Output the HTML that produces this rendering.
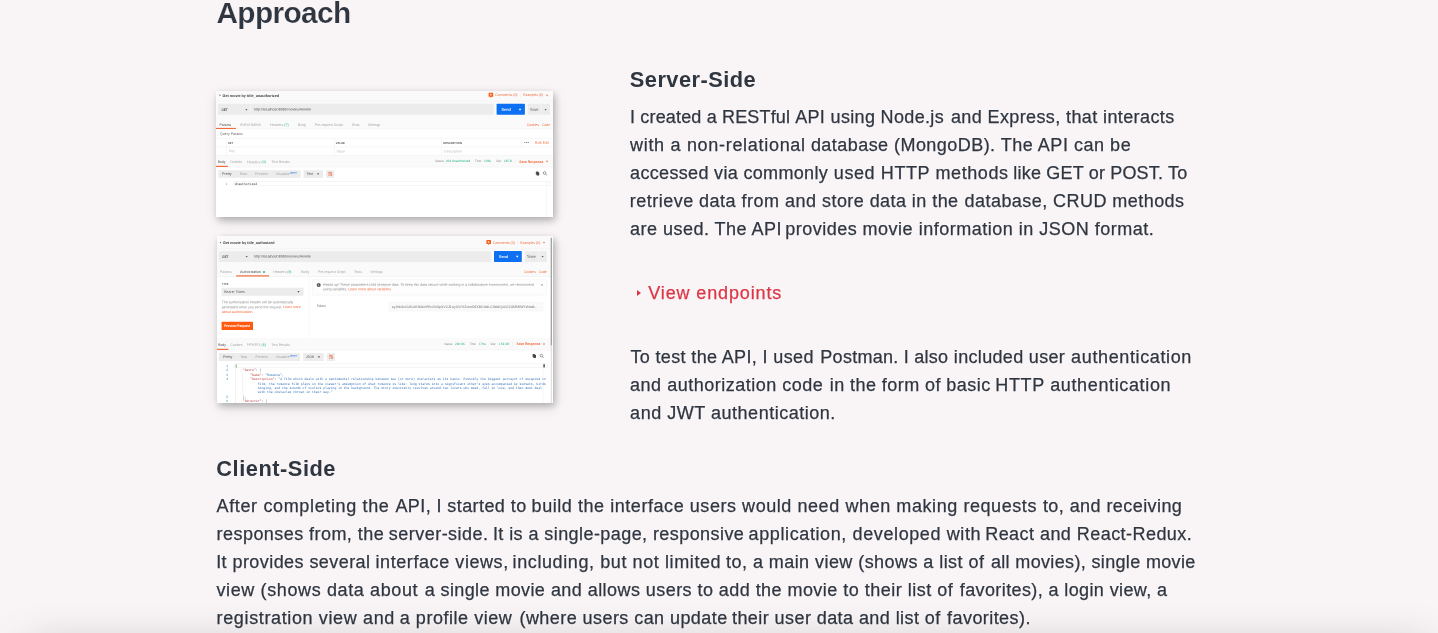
<!DOCTYPE html>
<html lang="en"><head><meta charset="utf-8"><title>Approach</title>
<style>
html,body{margin:0;padding:0}
body{width:1438px;height:633px;overflow:hidden;position:relative;background:#f9f5f7;font-family:"Liberation Sans",Arial,sans-serif;-webkit-font-smoothing:antialiased}
h2,h3,p,figure,details{margin:0;padding:0}
summary{list-style:none;display:block;cursor:pointer}summary::-webkit-details-marker{display:none}
.t{position:absolute;display:block;white-space:nowrap;line-height:28px;margin:0;-webkit-text-stroke:0.25px}
.shot{position:absolute;left:216px;width:337px;background:#fff;overflow:hidden;box-shadow:2px 3px 7px rgba(0,0,0,.26),1px 5px 14px rgba(0,0,0,.09)}
.shot svg{display:block;will-change:transform;filter:blur(0.3px)}
#s1{top:91px;height:126px}
#s2{top:236px;height:167px;left:216.7px;width:336.3px}
#s2 svg{margin-left:-0.7px}
#tri{position:absolute;left:636.8px;top:289.6px;width:0;height:0;border-left:4.6px solid #dc3545;border-top:3.2px solid transparent;border-bottom:3.2px solid transparent}
#txt{position:absolute;left:0;top:0;width:1438px;height:633px;will-change:transform}
#foot{position:absolute;left:28px;right:8px;top:645px;height:80px;box-shadow:0 0 46px rgba(0,0,0,.2)}
#h2{left:216.40px;top:-1.50px;font-size:29.8px;font-weight:700;color:#2f3640;letter-spacing:-0.6000px}
#h3a{left:629.80px;top:65.50px;font-size:21.8px;font-weight:700;color:#2f3640;letter-spacing:0.4700px}
#p1a1{left:630.05px;top:103.00px;font-size:18.0px;font-weight:400;color:#2f3640;letter-spacing:0.1611px}
#p1a2{left:795.20px;top:103.00px;font-size:18.0px;font-weight:400;color:#2f3640;letter-spacing:0.3375px}
#p1a3{left:950.90px;top:103.00px;font-size:18.0px;font-weight:400;color:#2f3640;letter-spacing:0.3923px}
#p1b1{left:630.00px;top:131.00px;font-size:18.0px;font-weight:400;color:#2f3640;letter-spacing:0.6975px}
#p1b2{left:810.90px;top:131.00px;font-size:18.0px;font-weight:400;color:#2f3640;letter-spacing:0.4500px}
#p1b3{left:1000.70px;top:131.00px;font-size:18.0px;font-weight:400;color:#2f3640;letter-spacing:0.5308px}
#p1c1{left:630.10px;top:159.00px;font-size:18.0px;font-weight:400;color:#2f3640;letter-spacing:0.3300px}
#p1c2{left:833.80px;top:159.00px;font-size:18.0px;font-weight:400;color:#2f3640;letter-spacing:0.5938px}
#p1c3{left:1013.35px;top:159.00px;font-size:18.0px;font-weight:400;color:#2f3640;letter-spacing:0.1842px}
#p1d1{left:629.80px;top:187.00px;font-size:18.0px;font-weight:400;color:#2f3640;letter-spacing:0.4762px}
#p1d2{left:822.00px;top:187.00px;font-size:18.0px;font-weight:400;color:#2f3640;letter-spacing:0.4375px}
#p1d3{left:964.60px;top:187.00px;font-size:18.0px;font-weight:400;color:#2f3640;letter-spacing:0.4452px}
#p1e1{left:630.10px;top:215.00px;font-size:18.0px;font-weight:400;color:#2f3640;letter-spacing:0.4750px}
#p1e2{left:785.35px;top:215.00px;font-size:18.0px;font-weight:400;color:#2f3640;letter-spacing:0.4692px}
#p1e3{left:918.80px;top:215.00px;font-size:18.0px;font-weight:400;color:#2f3640;letter-spacing:0.4962px}
#sum{left:648.30px;top:279.00px;font-size:18.0px;font-weight:400;color:#dc3545;letter-spacing:0.8615px}
#p2a1{left:630.40px;top:343.00px;font-size:18.0px;font-weight:400;color:#2f3640;letter-spacing:0.3591px}
#p2a2{left:820.35px;top:343.00px;font-size:18.0px;font-weight:400;color:#2f3640;letter-spacing:0.2643px}
#p2a3{left:953.80px;top:343.00px;font-size:18.0px;font-weight:400;color:#2f3640;letter-spacing:0.3333px}
#p2a4{left:1071.10px;top:343.00px;font-size:18.0px;font-weight:400;color:#2f3640;letter-spacing:0.6308px}
#p2b1{left:630.10px;top:371.00px;font-size:18.0px;font-weight:400;color:#2f3640;letter-spacing:0.5000px}
#p2b2{left:829.70px;top:371.00px;font-size:18.0px;font-weight:400;color:#2f3640;letter-spacing:0.4421px}
#p2b3{left:995.30px;top:371.00px;font-size:18.0px;font-weight:400;color:#2f3640;letter-spacing:0.6389px}
#p2c1{left:630.10px;top:399.00px;font-size:18.0px;font-weight:400;color:#2f3640;letter-spacing:0.5227px}
#h3b{left:216.35px;top:454.50px;font-size:21.8px;font-weight:700;color:#2f3640;letter-spacing:0.5250px}
#p3a1{left:216.50px;top:492.00px;font-size:18.0px;font-weight:400;color:#2f3640;letter-spacing:0.6474px}
#p3a2{left:395.40px;top:492.00px;font-size:18.0px;font-weight:400;color:#2f3640;letter-spacing:0.4188px}
#p3a3{left:531.60px;top:492.00px;font-size:18.0px;font-weight:400;color:#2f3640;letter-spacing:0.5543px}
#p3a4{left:845.50px;top:492.00px;font-size:18.0px;font-weight:400;color:#2f3640;letter-spacing:0.5684px}
#p3a5{left:1042.90px;top:492.00px;font-size:18.0px;font-weight:400;color:#2f3640;letter-spacing:0.4312px}
#p3b1{left:216.60px;top:520.00px;font-size:18.0px;font-weight:400;color:#2f3640;letter-spacing:0.4444px}
#p3b2{left:388.80px;top:520.00px;font-size:18.0px;font-weight:400;color:#2f3640;letter-spacing:0.4727px}
#p3b3{left:492.90px;top:520.00px;font-size:18.0px;font-weight:400;color:#2f3640;letter-spacing:0.4267px}
#p3b4{left:748.60px;top:520.00px;font-size:18.0px;font-weight:400;color:#2f3640;letter-spacing:0.6077px}
#p3b5{left:985.20px;top:520.00px;font-size:18.0px;font-weight:400;color:#2f3640;letter-spacing:0.4524px}
#p3c1{left:216.20px;top:548.00px;font-size:18.0px;font-weight:400;color:#2f3640;letter-spacing:0.4333px}
#p3c2{left:375.50px;top:548.00px;font-size:18.0px;font-weight:400;color:#2f3640;letter-spacing:0.5767px}
#p3c3{left:512.60px;top:548.00px;font-size:18.0px;font-weight:400;color:#2f3640;letter-spacing:0.5960px}
#p3c4{left:726.10px;top:548.00px;font-size:18.0px;font-weight:400;color:#2f3640;letter-spacing:0.4419px}
#p3c5{left:990.90px;top:548.00px;font-size:18.0px;font-weight:400;color:#2f3640;letter-spacing:0.3479px}
#p3d1{left:216.50px;top:576.00px;font-size:18.0px;font-weight:400;color:#2f3640;letter-spacing:0.6143px}
#p3d2{left:424.70px;top:576.00px;font-size:18.0px;font-weight:400;color:#2f3640;letter-spacing:0.3923px}
#p3d3{left:550.90px;top:576.00px;font-size:18.0px;font-weight:400;color:#2f3640;letter-spacing:0.4438px}
#p3d4{left:843.30px;top:576.00px;font-size:18.0px;font-weight:400;color:#2f3640;letter-spacing:0.4933px}
#p3d5{left:959.80px;top:576.00px;font-size:18.0px;font-weight:400;color:#2f3640;letter-spacing:0.3885px}
#p3e1{left:216.60px;top:604.00px;font-size:18.0px;font-weight:400;color:#2f3640;letter-spacing:0.6300px}
#p3e2{left:399.80px;top:604.00px;font-size:18.0px;font-weight:400;color:#2f3640;letter-spacing:0.5308px}
#p3e3{left:519.50px;top:604.00px;font-size:18.0px;font-weight:400;color:#2f3640;letter-spacing:0.4364px}
#p3e4{left:732.00px;top:604.00px;font-size:18.0px;font-weight:400;color:#2f3640;letter-spacing:0.4269px}
#p3e5{left:947.10px;top:604.00px;font-size:18.0px;font-weight:400;color:#2f3640;letter-spacing:0.4300px}
#h2{-webkit-text-stroke:0.18px #f9f5f7}#h3a,#h3b{-webkit-text-stroke:0}
</style></head><body>
<div id="txt">
<h2 class="t" id="h2">Approach</h2>
<section id="server">
<h3 class="t" id="h3a">Server-Side</h3>
<p><span class="t" id="p1a1">I created a RESTful</span> <span class="t" id="p1a2">API using Node.js</span> <span class="t" id="p1a3">and Express, that interacts</span> <span class="t" id="p1b1">with a non-relational</span> <span class="t" id="p1b2">database (MongoDB).</span> <span class="t" id="p1b3">The API can be</span> <span class="t" id="p1c1">accessed via commonly</span> <span class="t" id="p1c2">used HTTP methods</span> <span class="t" id="p1c3">like GET or POST. To</span> <span class="t" id="p1d1">retrieve data from and</span> <span class="t" id="p1d2">store data in the</span> <span class="t" id="p1d3">database, CRUD methods</span> <span class="t" id="p1e1">are used. The API</span> <span class="t" id="p1e2">provides movie</span> <span class="t" id="p1e3">information in JSON format.</span></p>
<details><summary class="t" id="sum">View endpoints</summary></details>
<p><span class="t" id="p2a1">To test the API, I used</span> <span class="t" id="p2a2">Postman. I also</span> <span class="t" id="p2a3">included user</span> <span class="t" id="p2a4">authentication</span> <span class="t" id="p2b1">and authorization code</span> <span class="t" id="p2b2">in the form of basic</span> <span class="t" id="p2b3">HTTP authentication</span> <span class="t" id="p2c1">and JWT authentication.</span></p>
</section>
<section id="client">
<h3 class="t" id="h3b">Client-Side</h3>
<p><span class="t" id="p3a1">After completing the</span> <span class="t" id="p3a2">API, I started to</span> <span class="t" id="p3a3">build the interface users would need</span> <span class="t" id="p3a4">when making requests</span> <span class="t" id="p3a5">to, and receiving</span> <span class="t" id="p3b1">responses from, the</span> <span class="t" id="p3b2">server-side.</span> <span class="t" id="p3b3">It is a single-page, responsive</span> <span class="t" id="p3b4">application, developed with</span> <span class="t" id="p3b5">React and React-Redux.</span> <span class="t" id="p3c1">It provides several</span> <span class="t" id="p3c2">interface views,</span> <span class="t" id="p3c3">including, but not limited</span> <span class="t" id="p3c4">to, a main view (shows a list of</span> <span class="t" id="p3c5">all movies), single movie</span> <span class="t" id="p3d1">view (shows data about</span> <span class="t" id="p3d2">a single movie</span> <span class="t" id="p3d3">and allows users to add the movie</span> <span class="t" id="p3d4">to their list of</span> <span class="t" id="p3d5">favorites), a login view, a</span> <span class="t" id="p3e1">registration view and</span> <span class="t" id="p3e2">a profile view</span> <span class="t" id="p3e3">(where users can update</span> <span class="t" id="p3e4">their user data and list of</span> <span class="t" id="p3e5">favorites).</span></p>
</section>
<div id="tri"></div>
</div>
<figure class="shot" id="s1"><svg width="337" height="126" viewBox="0 0 337 126" text-rendering="geometricPrecision"><g opacity="0.999"><rect x="0.00" y="0.00" width="337.00" height="126.00" fill="#fff" rx="0"/><rect x="0.00" y="0.00" width="337.00" height="38.00" fill="#fafafa" rx="0"/><rect x="0.00" y="64.40" width="337.00" height="11.60" fill="#fafafa" rx="0"/><path d="M3.6 3.3l1.2 0.9l-1.2 0.9z" fill="#444"/><text transform="matrix(1 0.0005 0 1 0 0)" x="6.60" y="5.64" font-family="'Liberation Sans',Arial,sans-serif" font-size="3.85" font-weight="700" fill="#3a3a3a" textLength="56.40" lengthAdjust="spacingAndGlyphs">Get movie by title_unauthorized</text><path d="M273.10 1.70h3.6a0.5 0.5 0 0 1 0.5 0.5v3a0.5 0.5 0 0 1 -0.5 0.5h-1.1l-1.2 1.2v-1.2h-1.3a0.5 0.5 0 0 1 -0.5 -0.5v-3a0.5 0.5 0 0 1 0.5 -0.5z" fill="#fa5a14"/><path d="M274.80 2.60v2.2M273.70 3.70h2.2" stroke="#fff" stroke-width="0.55" fill="none"/><text transform="matrix(1 0.0005 0 1 0 0)" x="279.30" y="5.24" font-family="'Liberation Sans',Arial,sans-serif" font-size="3.63" font-weight="400" fill="#f26b3a" textLength="22.20" lengthAdjust="spacingAndGlyphs">Comments (0)</text><line x1="304.30" y1="2.00" x2="304.30" y2="6.20" stroke="#e4e4e4" stroke-width="0.4"/><text transform="matrix(1 0.0005 0 1 0 0)" x="307.20" y="5.23" font-family="'Liberation Sans',Arial,sans-serif" font-size="3.63" font-weight="400" fill="#f26b3a" textLength="19.90" lengthAdjust="spacingAndGlyphs">Examples (0)</text><path d="M330.04 3.69h2.12l-1.06 1.70z" fill="#f26b3a"/><line x1="0.00" y1="10.00" x2="337.00" y2="10.00" stroke="#f0f0f0" stroke-width="0.5"/><rect x="2.00" y="12.70" width="275.80" height="11.10" fill="#ececec" rx="0.7"/><line x1="34.50" y1="12.70" x2="34.50" y2="23.80" stroke="#fafafa" stroke-width="0.5"/><text transform="matrix(1 0.0005 0 1 0 0)" x="5.40" y="19.58" font-family="'Liberation Sans',Arial,sans-serif" font-size="3.63" font-weight="700" fill="#505050" textLength="6.30" lengthAdjust="spacingAndGlyphs">GET</text><path d="M29.34 17.89h2.12l-1.06 1.70z" fill="#555"/><text transform="matrix(1 0.0005 0 1 0 0)" x="38.00" y="19.56" font-family="'Liberation Sans',Arial,sans-serif" font-size="3.63" font-weight="400" fill="#505050" textLength="56.90" lengthAdjust="spacingAndGlyphs">http://localhost:8080/movies/Amelie</text><rect x="280.60" y="12.70" width="28.30" height="11.10" fill="#0d6ff2" rx="0.7"/><text transform="matrix(1 0.0005 0 1 0 0)" x="285.60" y="19.60" font-family="'Liberation Sans',Arial,sans-serif" font-size="3.85" font-weight="700" fill="#fff" textLength="9.20" lengthAdjust="spacingAndGlyphs">Send</text><path d="M302.75 17.75h2.50l-1.25 2.00z" fill="#fff"/><rect x="311.70" y="12.70" width="22.30" height="11.10" fill="#ececec" rx="0.7"/><line x1="325.40" y1="12.70" x2="325.40" y2="23.80" stroke="#fafafa" stroke-width="0.5"/><text transform="matrix(1 0.0005 0 1 0 0)" x="314.00" y="19.58" font-family="'Liberation Sans',Arial,sans-serif" font-size="3.85" font-weight="400" fill="#505050" textLength="8.70" lengthAdjust="spacingAndGlyphs">Save</text><path d="M328.54 17.89h2.12l-1.06 1.70z" fill="#555"/><text transform="matrix(1 0.0005 0 1 0 0)" x="3.50" y="34.78" font-family="'Liberation Sans',Arial,sans-serif" font-size="3.63" font-weight="400" fill="#505050" textLength="11.70" lengthAdjust="spacingAndGlyphs">Params</text><text transform="matrix(1 0.0005 0 1 0 0)" x="24.00" y="34.77" font-family="'Liberation Sans',Arial,sans-serif" font-size="3.63" font-weight="400" fill="#a6a6a6" textLength="21.20" lengthAdjust="spacingAndGlyphs">Authorization</text><text transform="matrix(1 0.0005 0 1 0 0)" x="54.00" y="34.75" font-family="'Liberation Sans',Arial,sans-serif" font-size="3.63" font-weight="400" fill="#a6a6a6" textLength="13.30" lengthAdjust="spacingAndGlyphs">Headers</text><text transform="matrix(1 0.0005 0 1 0 0)" x="68.30" y="34.75" font-family="'Liberation Sans',Arial,sans-serif" font-size="3.63" font-weight="400" fill="#26b47f" textLength="4.30" lengthAdjust="spacingAndGlyphs">(7)</text><text transform="matrix(1 0.0005 0 1 0 0)" x="82.10" y="34.74" font-family="'Liberation Sans',Arial,sans-serif" font-size="3.63" font-weight="400" fill="#a6a6a6" textLength="8.00" lengthAdjust="spacingAndGlyphs">Body</text><text transform="matrix(1 0.0005 0 1 0 0)" x="98.70" y="34.73" font-family="'Liberation Sans',Arial,sans-serif" font-size="3.63" font-weight="400" fill="#a6a6a6" textLength="28.00" lengthAdjust="spacingAndGlyphs">Pre-request Script</text><text transform="matrix(1 0.0005 0 1 0 0)" x="135.60" y="34.71" font-family="'Liberation Sans',Arial,sans-serif" font-size="3.63" font-weight="400" fill="#a6a6a6" textLength="8.00" lengthAdjust="spacingAndGlyphs">Tests</text><text transform="matrix(1 0.0005 0 1 0 0)" x="152.00" y="34.70" font-family="'Liberation Sans',Arial,sans-serif" font-size="3.63" font-weight="400" fill="#a6a6a6" textLength="12.30" lengthAdjust="spacingAndGlyphs">Settings</text><text transform="matrix(1 0.0005 0 1 0 0)" x="310.90" y="34.62" font-family="'Liberation Sans',Arial,sans-serif" font-size="3.63" font-weight="400" fill="#f26b3a" textLength="12.10" lengthAdjust="spacingAndGlyphs">Cookies</text><text transform="matrix(1 0.0005 0 1 0 0)" x="326.20" y="34.62" font-family="'Liberation Sans',Arial,sans-serif" font-size="3.63" font-weight="400" fill="#f26b3a" textLength="7.80" lengthAdjust="spacingAndGlyphs">Code</text><line x1="0.00" y1="38.00" x2="337.00" y2="38.00" stroke="#ececec" stroke-width="0.5"/><rect x="0.00" y="36.90" width="19.90" height="1.10" fill="#f26b3a" rx="0"/><text transform="matrix(1 0.0005 0 1 0 0)" x="4.10" y="43.68" font-family="'Liberation Sans',Arial,sans-serif" font-size="3.63" font-weight="400" fill="#666" textLength="22.80" lengthAdjust="spacingAndGlyphs">Query Params</text><line x1="0.00" y1="47.30" x2="337.00" y2="47.30" stroke="#ececec" stroke-width="0.45"/><line x1="0.00" y1="55.90" x2="337.00" y2="55.90" stroke="#ececec" stroke-width="0.45"/><line x1="0.00" y1="64.40" x2="337.00" y2="64.40" stroke="#ececec" stroke-width="0.45"/><line x1="10.40" y1="47.30" x2="10.40" y2="64.40" stroke="#ececec" stroke-width="0.45"/><line x1="118.50" y1="47.30" x2="118.50" y2="64.40" stroke="#ececec" stroke-width="0.45"/><line x1="225.60" y1="47.30" x2="225.60" y2="64.40" stroke="#ececec" stroke-width="0.45"/><line x1="305.60" y1="47.30" x2="305.60" y2="55.90" stroke="#ececec" stroke-width="0.45"/><text transform="matrix(1 0.0005 0 1 0 0)" x="12.00" y="52.70" font-family="'Liberation Sans',Arial,sans-serif" font-size="2.97" font-weight="700" fill="#555" textLength="5.10" lengthAdjust="spacingAndGlyphs">KEY</text><text transform="matrix(1 0.0005 0 1 0 0)" x="119.80" y="52.64" font-family="'Liberation Sans',Arial,sans-serif" font-size="2.97" font-weight="700" fill="#555" textLength="9.10" lengthAdjust="spacingAndGlyphs">VALUE</text><text transform="matrix(1 0.0005 0 1 0 0)" x="227.20" y="52.59" font-family="'Liberation Sans',Arial,sans-serif" font-size="2.97" font-weight="700" fill="#555" textLength="18.70" lengthAdjust="spacingAndGlyphs">DESCRIPTION</text><text transform="matrix(1 0.0005 0 1 0 0)" x="308.10" y="52.32" font-family="'Liberation Sans',Arial,sans-serif" font-size="2.86" font-weight="700" fill="#555" textLength="5.10" lengthAdjust="spacingAndGlyphs">•••</text><text transform="matrix(1 0.0005 0 1 0 0)" x="319.10" y="52.69" font-family="'Liberation Sans',Arial,sans-serif" font-size="3.52" font-weight="400" fill="#f26b3a" textLength="13.70" lengthAdjust="spacingAndGlyphs">Bulk Edit</text><text transform="matrix(1 0.0005 0 1 0 0)" x="13.00" y="61.44" font-family="'Liberation Sans',Arial,sans-serif" font-size="3.52" font-weight="400" fill="#bdbdbd" textLength="5.70" lengthAdjust="spacingAndGlyphs">Key</text><text transform="matrix(1 0.0005 0 1 0 0)" x="120.40" y="61.39" font-family="'Liberation Sans',Arial,sans-serif" font-size="3.52" font-weight="400" fill="#bdbdbd" textLength="8.60" lengthAdjust="spacingAndGlyphs">Value</text><text transform="matrix(1 0.0005 0 1 0 0)" x="228.10" y="61.34" font-family="'Liberation Sans',Arial,sans-serif" font-size="3.52" font-weight="400" fill="#bdbdbd" textLength="17.80" lengthAdjust="spacingAndGlyphs">Description</text><text transform="matrix(1 0.0005 0 1 0 0)" x="1.80" y="72.28" font-family="'Liberation Sans',Arial,sans-serif" font-size="3.63" font-weight="400" fill="#505050" textLength="7.70" lengthAdjust="spacingAndGlyphs">Body</text><text transform="matrix(1 0.0005 0 1 0 0)" x="14.20" y="72.27" font-family="'Liberation Sans',Arial,sans-serif" font-size="3.63" font-weight="400" fill="#a6a6a6" textLength="12.00" lengthAdjust="spacingAndGlyphs">Cookies</text><text transform="matrix(1 0.0005 0 1 0 0)" x="31.00" y="72.26" font-family="'Liberation Sans',Arial,sans-serif" font-size="3.63" font-weight="400" fill="#a6a6a6" textLength="13.60" lengthAdjust="spacingAndGlyphs">Headers</text><text transform="matrix(1 0.0005 0 1 0 0)" x="45.60" y="72.26" font-family="'Liberation Sans',Arial,sans-serif" font-size="3.63" font-weight="400" fill="#26b47f" textLength="4.30" lengthAdjust="spacingAndGlyphs">(4)</text><text transform="matrix(1 0.0005 0 1 0 0)" x="55.60" y="72.25" font-family="'Liberation Sans',Arial,sans-serif" font-size="3.63" font-weight="400" fill="#a6a6a6" textLength="18.40" lengthAdjust="spacingAndGlyphs">Test Results</text><text transform="matrix(1 0.0005 0 1 0 0)" x="219.00" y="71.25" font-family="'Liberation Sans',Arial,sans-serif" font-size="3.19" font-weight="400" fill="#8a8a8a" textLength="9.20" lengthAdjust="spacingAndGlyphs">Status:</text><text transform="matrix(1 0.0005 0 1 0 0)" x="230.00" y="71.25" font-family="'Liberation Sans',Arial,sans-serif" font-size="3.19" font-weight="400" fill="#26b47f" textLength="24.10" lengthAdjust="spacingAndGlyphs">401 Unauthorized</text><text transform="matrix(1 0.0005 0 1 0 0)" x="259.10" y="71.23" font-family="'Liberation Sans',Arial,sans-serif" font-size="3.19" font-weight="400" fill="#8a8a8a" textLength="6.70" lengthAdjust="spacingAndGlyphs">Time:</text><text transform="matrix(1 0.0005 0 1 0 0)" x="267.70" y="71.23" font-family="'Liberation Sans',Arial,sans-serif" font-size="3.19" font-weight="400" fill="#26b47f" textLength="7.30" lengthAdjust="spacingAndGlyphs">3.08s</text><text transform="matrix(1 0.0005 0 1 0 0)" x="279.90" y="71.22" font-family="'Liberation Sans',Arial,sans-serif" font-size="3.19" font-weight="400" fill="#8a8a8a" textLength="5.80" lengthAdjust="spacingAndGlyphs">Size:</text><text transform="matrix(1 0.0005 0 1 0 0)" x="287.90" y="71.22" font-family="'Liberation Sans',Arial,sans-serif" font-size="3.19" font-weight="400" fill="#26b47f" textLength="8.00" lengthAdjust="spacingAndGlyphs">145 B</text><line x1="299.60" y1="68.00" x2="299.60" y2="72.60" stroke="#e8e8e8" stroke-width="0.4"/><text transform="matrix(1 0.0005 0 1 0 0)" x="303.30" y="71.43" font-family="'Liberation Sans',Arial,sans-serif" font-size="3.63" font-weight="700" fill="#f26b3a" textLength="24.00" lengthAdjust="spacingAndGlyphs">Save Response</text><path d="M330.04 69.79h2.12l-1.06 1.70z" fill="#f26b3a"/><line x1="0.00" y1="76.00" x2="337.00" y2="76.00" stroke="#ececec" stroke-width="0.5"/><rect x="0.00" y="74.80" width="11.80" height="1.20" fill="#f26b3a" rx="0"/><rect x="2.30" y="79.20" width="82.40" height="7.60" fill="#ececec" rx="0.6"/><text transform="matrix(1 0.0005 0 1 0 0)" x="6.00" y="83.98" font-family="'Liberation Sans',Arial,sans-serif" font-size="3.63" font-weight="400" fill="#505050" textLength="9.70" lengthAdjust="spacingAndGlyphs">Pretty</text><text transform="matrix(1 0.0005 0 1 0 0)" x="24.10" y="83.97" font-family="'Liberation Sans',Arial,sans-serif" font-size="3.63" font-weight="400" fill="#a6a6a6" textLength="6.80" lengthAdjust="spacingAndGlyphs">Raw</text><text transform="matrix(1 0.0005 0 1 0 0)" x="39.10" y="83.96" font-family="'Liberation Sans',Arial,sans-serif" font-size="3.63" font-weight="400" fill="#a6a6a6" textLength="12.70" lengthAdjust="spacingAndGlyphs">Preview</text><text transform="matrix(1 0.0005 0 1 0 0)" x="60.00" y="83.95" font-family="'Liberation Sans',Arial,sans-serif" font-size="3.63" font-weight="400" fill="#a6a6a6" textLength="13.90" lengthAdjust="spacingAndGlyphs">Visualize</text><text transform="matrix(1 0.0005 0 1 0 0)" x="74.50" y="82.46" font-family="'Liberation Sans',Arial,sans-serif" font-size="2.2" font-weight="700" fill="#2a83f2" textLength="6.70" lengthAdjust="spacingAndGlyphs">BETA</text><rect x="87.60" y="79.20" width="19.40" height="7.60" fill="#ececec" rx="0.6"/><text transform="matrix(1 0.0005 0 1 0 0)" x="90.70" y="83.93" font-family="'Liberation Sans',Arial,sans-serif" font-size="3.63" font-weight="400" fill="#505050" textLength="6.30" lengthAdjust="spacingAndGlyphs">Text</text><path d="M101.04 82.29h2.12l-1.06 1.70z" fill="#555"/><rect x="110.00" y="79.20" width="8.20" height="7.60" fill="#ececec" rx="0.6"/><path d="M112.40 81.40h3.4M112.40 82.80h3.4v1.5h-1.6M112.40 84.30h1.2" fill="none" stroke="#f26b3a" stroke-width="0.75"/><rect x="319.80" y="80.50" width="2.6" height="3.1" rx="0.4" fill="#555"/><rect x="320.60" y="81.30" width="2.6" height="3.1" rx="0.4" fill="#444"/><circle cx="328.60" cy="82.00" r="1.35" fill="none" stroke="#555" stroke-width="0.55"/><line x1="329.60" y1="83.00" x2="330.80" y2="84.20" stroke="#555" stroke-width="0.6"/><rect x="18.20" y="90.60" width="315.80" height="3.90" fill="none" rx="0" stroke="#e9e9e9" stroke-width="0.45"/><line x1="330.60" y1="90.60" x2="330.60" y2="126.00" stroke="#ececec" stroke-width="0.45"/><text transform="matrix(1 0.0005 0 1 0 0)" x="9.80" y="93.52" font-family="'Liberation Mono','DejaVu Sans Mono',monospace" font-size="3.41" font-weight="400" fill="#2b88a8" textLength="1.50" lengthAdjust="spacingAndGlyphs">1</text><text transform="matrix(1 0.0005 0 1 0 0)" x="18.70" y="93.51" font-family="'Liberation Mono','DejaVu Sans Mono',monospace" font-size="3.41" font-weight="400" fill="#333" textLength="22.30" lengthAdjust="spacingAndGlyphs">Unauthorized</text></g></svg></figure>
<figure class="shot" id="s2"><svg width="337" height="167" viewBox="0 0 337 167" text-rendering="geometricPrecision"><g opacity="0.999"><rect x="0.00" y="0.00" width="337.00" height="167.00" fill="#fff" rx="0"/><rect x="0.00" y="0.00" width="337.00" height="40.50" fill="#fafafa" rx="0"/><rect x="0.00" y="102.00" width="337.00" height="12.00" fill="#fafafa" rx="0"/><path d="M4.1 5.7l1.3 0.9l-1.3 0.9z" fill="#444"/><text transform="matrix(1 0.0005 0 1 0 0)" x="7.10" y="7.64" font-family="'Liberation Sans',Arial,sans-serif" font-size="3.85" font-weight="700" fill="#3a3a3a" textLength="51.40" lengthAdjust="spacingAndGlyphs">Get movie by title_authorized</text><path d="M270.90 4.10h3.6a0.5 0.5 0 0 1 0.5 0.5v3a0.5 0.5 0 0 1 -0.5 0.5h-1.1l-1.2 1.2v-1.2h-1.3a0.5 0.5 0 0 1 -0.5 -0.5v-3a0.5 0.5 0 0 1 0.5 -0.5z" fill="#fa5a14"/><path d="M272.60 5.00v2.2M271.50 6.10h2.2" stroke="#fff" stroke-width="0.55" fill="none"/><text transform="matrix(1 0.0005 0 1 0 0)" x="276.90" y="7.44" font-family="'Liberation Sans',Arial,sans-serif" font-size="3.63" font-weight="400" fill="#f26b3a" textLength="21.90" lengthAdjust="spacingAndGlyphs">Comments (0)</text><line x1="301.60" y1="4.40" x2="301.60" y2="8.80" stroke="#e4e4e4" stroke-width="0.4"/><text transform="matrix(1 0.0005 0 1 0 0)" x="304.30" y="7.43" font-family="'Liberation Sans',Arial,sans-serif" font-size="3.63" font-weight="400" fill="#f26b3a" textLength="19.70" lengthAdjust="spacingAndGlyphs">Examples (0)</text><path d="M326.94 5.89h2.12l-1.06 1.70z" fill="#f26b3a"/><line x1="0.00" y1="12.70" x2="337.00" y2="12.70" stroke="#f0f0f0" stroke-width="0.5"/><rect x="2.60" y="15.20" width="272.70" height="10.80" fill="#ececec" rx="0.7"/><line x1="35.00" y1="15.20" x2="35.00" y2="26.00" stroke="#fafafa" stroke-width="0.5"/><text transform="matrix(1 0.0005 0 1 0 0)" x="6.00" y="21.58" font-family="'Liberation Sans',Arial,sans-serif" font-size="3.63" font-weight="700" fill="#505050" textLength="6.30" lengthAdjust="spacingAndGlyphs">GET</text><path d="M29.64 19.89h2.12l-1.06 1.70z" fill="#555"/><text transform="matrix(1 0.0005 0 1 0 0)" x="38.00" y="21.56" font-family="'Liberation Sans',Arial,sans-serif" font-size="3.63" font-weight="400" fill="#505050" textLength="56.80" lengthAdjust="spacingAndGlyphs">http://localhost:8080/movies/Amelie</text><rect x="278.00" y="15.10" width="27.80" height="10.90" fill="#0d6ff2" rx="0.7"/><text transform="matrix(1 0.0005 0 1 0 0)" x="283.10" y="21.50" font-family="'Liberation Sans',Arial,sans-serif" font-size="3.85" font-weight="700" fill="#fff" textLength="9.00" lengthAdjust="spacingAndGlyphs">Send</text><path d="M299.95 19.75h2.50l-1.25 2.00z" fill="#fff"/><rect x="308.80" y="15.20" width="22.10" height="10.80" fill="#ececec" rx="0.7"/><line x1="322.70" y1="15.20" x2="322.70" y2="26.00" stroke="#fafafa" stroke-width="0.5"/><text transform="matrix(1 0.0005 0 1 0 0)" x="311.00" y="21.48" font-family="'Liberation Sans',Arial,sans-serif" font-size="3.85" font-weight="400" fill="#505050" textLength="8.80" lengthAdjust="spacingAndGlyphs">Save</text><path d="M325.54 19.89h2.12l-1.06 1.70z" fill="#555"/><text transform="matrix(1 0.0005 0 1 0 0)" x="4.10" y="37.08" font-family="'Liberation Sans',Arial,sans-serif" font-size="3.63" font-weight="400" fill="#a6a6a6" textLength="11.60" lengthAdjust="spacingAndGlyphs">Params</text><text transform="matrix(1 0.0005 0 1 0 0)" x="24.00" y="37.07" font-family="'Liberation Sans',Arial,sans-serif" font-size="3.63" font-weight="400" fill="#505050" textLength="21.20" lengthAdjust="spacingAndGlyphs">Authorization</text><circle cx="48" cy="36.1" r="1" fill="#26b47f"/><text transform="matrix(1 0.0005 0 1 0 0)" x="57.20" y="37.05" font-family="'Liberation Sans',Arial,sans-serif" font-size="3.63" font-weight="400" fill="#a6a6a6" textLength="13.10" lengthAdjust="spacingAndGlyphs">Headers</text><text transform="matrix(1 0.0005 0 1 0 0)" x="71.30" y="37.04" font-family="'Liberation Sans',Arial,sans-serif" font-size="3.63" font-weight="400" fill="#26b47f" textLength="4.20" lengthAdjust="spacingAndGlyphs">(8)</text><text transform="matrix(1 0.0005 0 1 0 0)" x="85.30" y="37.04" font-family="'Liberation Sans',Arial,sans-serif" font-size="3.63" font-weight="400" fill="#a6a6a6" textLength="7.90" lengthAdjust="spacingAndGlyphs">Body</text><text transform="matrix(1 0.0005 0 1 0 0)" x="101.70" y="37.03" font-family="'Liberation Sans',Arial,sans-serif" font-size="3.63" font-weight="400" fill="#a6a6a6" textLength="27.80" lengthAdjust="spacingAndGlyphs">Pre-request Script</text><text transform="matrix(1 0.0005 0 1 0 0)" x="138.00" y="37.01" font-family="'Liberation Sans',Arial,sans-serif" font-size="3.63" font-weight="400" fill="#a6a6a6" textLength="8.00" lengthAdjust="spacingAndGlyphs">Tests</text><text transform="matrix(1 0.0005 0 1 0 0)" x="154.30" y="37.00" font-family="'Liberation Sans',Arial,sans-serif" font-size="3.63" font-weight="400" fill="#a6a6a6" textLength="12.40" lengthAdjust="spacingAndGlyphs">Settings</text><text transform="matrix(1 0.0005 0 1 0 0)" x="307.90" y="36.93" font-family="'Liberation Sans',Arial,sans-serif" font-size="3.63" font-weight="400" fill="#f26b3a" textLength="11.90" lengthAdjust="spacingAndGlyphs">Cookies</text><text transform="matrix(1 0.0005 0 1 0 0)" x="323.00" y="36.92" font-family="'Liberation Sans',Arial,sans-serif" font-size="3.63" font-weight="400" fill="#f26b3a" textLength="7.90" lengthAdjust="spacingAndGlyphs">Code</text><line x1="0.00" y1="40.50" x2="337.00" y2="40.50" stroke="#ececec" stroke-width="0.5"/><rect x="20.20" y="39.30" width="32.80" height="1.20" fill="#f26b3a" rx="0"/><text transform="matrix(1 0.0005 0 1 0 0)" x="5.80" y="48.80" font-family="'Liberation Sans',Arial,sans-serif" font-size="2.97" font-weight="700" fill="#666" textLength="6.80" lengthAdjust="spacingAndGlyphs">TYPE</text><rect x="5.60" y="51.80" width="82.00" height="7.90" fill="#ececec" rx="0.6"/><text transform="matrix(1 0.0005 0 1 0 0)" x="8.20" y="56.68" font-family="'Liberation Sans',Arial,sans-serif" font-size="3.63" font-weight="400" fill="#606060" textLength="20.90" lengthAdjust="spacingAndGlyphs">Bearer Token</text><path d="M81.44 54.99h2.12l-1.06 1.70z" fill="#555"/><text transform="matrix(1 0.0005 0 1 0 0)" x="5.80" y="67.25" font-family="'Liberation Sans',Arial,sans-serif" font-size="3.52" font-weight="400" fill="#8a8a8a" textLength="71.60" lengthAdjust="spacingAndGlyphs">The authorization header will be automatically</text><text transform="matrix(1 0.0005 0 1 0 0)" x="5.80" y="72.15" font-family="'Liberation Sans',Arial,sans-serif" font-size="3.52" font-weight="400" fill="#8a8a8a" textLength="60.40" lengthAdjust="spacingAndGlyphs">generated when you send the request.</text><text transform="matrix(1 0.0005 0 1 0 0)" x="67.20" y="72.12" font-family="'Liberation Sans',Arial,sans-serif" font-size="3.52" font-weight="400" fill="#f26b3a" textLength="17.40" lengthAdjust="spacingAndGlyphs">Learn more</text><text transform="matrix(1 0.0005 0 1 0 0)" x="5.80" y="77.05" font-family="'Liberation Sans',Arial,sans-serif" font-size="3.52" font-weight="400" fill="#f26b3a" textLength="30.80" lengthAdjust="spacingAndGlyphs">about authorization</text><rect x="5.60" y="85.70" width="31.40" height="8.30" fill="#ff5a0f" rx="0.6"/><text transform="matrix(1 0.0005 0 1 0 0)" x="8.20" y="90.88" font-family="'Liberation Sans',Arial,sans-serif" font-size="3.63" font-weight="700" fill="#fff" textLength="26.00" lengthAdjust="spacingAndGlyphs">Preview Request</text><line x1="93.20" y1="40.50" x2="93.20" y2="102.00" stroke="#efefef" stroke-width="0.45"/><rect x="96.40" y="43.70" width="234.20" height="15.40" fill="#fdfdfd" rx="0.6" stroke="#ececec" stroke-width="0.45"/><circle cx="102.7" cy="49" r="2" fill="#555"/><text transform="matrix(1 0.0005 0 1 0 0)" x="102.25" y="49.72" font-family="'Liberation Sans',Arial,sans-serif" font-size="2.86" font-weight="700" fill="#fff" textLength="0.90" lengthAdjust="spacingAndGlyphs">i</text><text transform="matrix(1 0.0005 0 1 0 0)" x="107.10" y="49.60" font-family="'Liberation Sans',Arial,sans-serif" font-size="3.52" font-weight="400" fill="#8a8a8a" textLength="210.90" lengthAdjust="spacingAndGlyphs">Heads up! These parameters hold sensitive data. To keep this data secure while working in a collaborative environment, we recommend</text><text transform="matrix(1 0.0005 0 1 0 0)" x="107.10" y="54.30" font-family="'Liberation Sans',Arial,sans-serif" font-size="3.52" font-weight="400" fill="#8a8a8a" textLength="24.10" lengthAdjust="spacingAndGlyphs">using variables.</text><text transform="matrix(1 0.0005 0 1 0 0)" x="132.20" y="54.28" font-family="'Liberation Sans',Arial,sans-serif" font-size="3.52" font-weight="400" fill="#f26b3a" textLength="42.80" lengthAdjust="spacingAndGlyphs">Learn more about variables</text><text transform="matrix(1 0.0005 0 1 0 0)" x="325.20" y="49.79" font-family="'Liberation Sans',Arial,sans-serif" font-size="3.52" font-weight="700" fill="#555" textLength="1.70" lengthAdjust="spacingAndGlyphs">×</text><text transform="matrix(1 0.0005 0 1 0 0)" x="100.80" y="71.20" font-family="'Liberation Sans',Arial,sans-serif" font-size="3.52" font-weight="400" fill="#707070" textLength="8.90" lengthAdjust="spacingAndGlyphs">Token</text><rect x="173.10" y="66.30" width="153.70" height="8.70" fill="#fafafa" rx="0.6" stroke="#efefef" stroke-width="0.4"/><text transform="matrix(1 0.0005 0 1 0 0)" x="176.00" y="71.46" font-family="'Liberation Sans',Arial,sans-serif" font-size="3.52" font-weight="400" fill="#707070" textLength="145.40" lengthAdjust="spacingAndGlyphs">eyJhbGciOiJIUzI1NiIsInR5cCI6IkpXVCJ9.eyJGYXZvcml0ZXMiOltdLCJfaWQiOiI1ZGM5MWYxNzdk...</text><text transform="matrix(1 0.0005 0 1 0 0)" x="2.20" y="109.58" font-family="'Liberation Sans',Arial,sans-serif" font-size="3.63" font-weight="400" fill="#505050" textLength="7.80" lengthAdjust="spacingAndGlyphs">Body</text><text transform="matrix(1 0.0005 0 1 0 0)" x="14.60" y="109.57" font-family="'Liberation Sans',Arial,sans-serif" font-size="3.63" font-weight="400" fill="#a6a6a6" textLength="12.00" lengthAdjust="spacingAndGlyphs">Cookies</text><text transform="matrix(1 0.0005 0 1 0 0)" x="31.00" y="109.56" font-family="'Liberation Sans',Arial,sans-serif" font-size="3.63" font-weight="400" fill="#a6a6a6" textLength="13.60" lengthAdjust="spacingAndGlyphs">Headers</text><text transform="matrix(1 0.0005 0 1 0 0)" x="45.60" y="109.56" font-family="'Liberation Sans',Arial,sans-serif" font-size="3.63" font-weight="400" fill="#26b47f" textLength="4.30" lengthAdjust="spacingAndGlyphs">(6)</text><text transform="matrix(1 0.0005 0 1 0 0)" x="55.60" y="109.55" font-family="'Liberation Sans',Arial,sans-serif" font-size="3.63" font-weight="400" fill="#a6a6a6" textLength="18.40" lengthAdjust="spacingAndGlyphs">Test Results</text><text transform="matrix(1 0.0005 0 1 0 0)" x="228.20" y="108.75" font-family="'Liberation Sans',Arial,sans-serif" font-size="3.19" font-weight="400" fill="#8a8a8a" textLength="8.70" lengthAdjust="spacingAndGlyphs">Status:</text><text transform="matrix(1 0.0005 0 1 0 0)" x="239.10" y="108.74" font-family="'Liberation Sans',Arial,sans-serif" font-size="3.19" font-weight="400" fill="#26b47f" textLength="9.90" lengthAdjust="spacingAndGlyphs">200 OK</text><text transform="matrix(1 0.0005 0 1 0 0)" x="254.00" y="108.73" font-family="'Liberation Sans',Arial,sans-serif" font-size="3.19" font-weight="400" fill="#8a8a8a" textLength="6.30" lengthAdjust="spacingAndGlyphs">Time:</text><text transform="matrix(1 0.0005 0 1 0 0)" x="262.90" y="108.73" font-family="'Liberation Sans',Arial,sans-serif" font-size="3.19" font-weight="400" fill="#26b47f" textLength="7.10" lengthAdjust="spacingAndGlyphs">17ms</text><text transform="matrix(1 0.0005 0 1 0 0)" x="274.20" y="108.72" font-family="'Liberation Sans',Arial,sans-serif" font-size="3.19" font-weight="400" fill="#8a8a8a" textLength="5.80" lengthAdjust="spacingAndGlyphs">Size:</text><text transform="matrix(1 0.0005 0 1 0 0)" x="282.60" y="108.72" font-family="'Liberation Sans',Arial,sans-serif" font-size="3.19" font-weight="400" fill="#26b47f" textLength="10.60" lengthAdjust="spacingAndGlyphs">1.54 KB</text><line x1="296.80" y1="105.80" x2="296.80" y2="110.40" stroke="#e8e8e8" stroke-width="0.4"/><text transform="matrix(1 0.0005 0 1 0 0)" x="300.50" y="108.93" font-family="'Liberation Sans',Arial,sans-serif" font-size="3.63" font-weight="700" fill="#f26b3a" textLength="23.80" lengthAdjust="spacingAndGlyphs">Save Response</text><path d="M326.94 107.59h2.12l-1.06 1.70z" fill="#f26b3a"/><line x1="0.00" y1="114.00" x2="337.00" y2="114.00" stroke="#ececec" stroke-width="0.5"/><rect x="0.00" y="112.80" width="12.30" height="1.20" fill="#f26b3a" rx="0"/><rect x="2.80" y="117.10" width="81.30" height="7.80" fill="#ececec" rx="0.6"/><text transform="matrix(1 0.0005 0 1 0 0)" x="7.00" y="121.98" font-family="'Liberation Sans',Arial,sans-serif" font-size="3.63" font-weight="400" fill="#505050" textLength="9.40" lengthAdjust="spacingAndGlyphs">Pretty</text><text transform="matrix(1 0.0005 0 1 0 0)" x="24.70" y="121.97" font-family="'Liberation Sans',Arial,sans-serif" font-size="3.63" font-weight="400" fill="#a6a6a6" textLength="6.30" lengthAdjust="spacingAndGlyphs">Raw</text><text transform="matrix(1 0.0005 0 1 0 0)" x="39.50" y="121.96" font-family="'Liberation Sans',Arial,sans-serif" font-size="3.63" font-weight="400" fill="#a6a6a6" textLength="12.30" lengthAdjust="spacingAndGlyphs">Preview</text><text transform="matrix(1 0.0005 0 1 0 0)" x="60.00" y="121.95" font-family="'Liberation Sans',Arial,sans-serif" font-size="3.63" font-weight="400" fill="#a6a6a6" textLength="13.60" lengthAdjust="spacingAndGlyphs">Visualize</text><text transform="matrix(1 0.0005 0 1 0 0)" x="74.30" y="120.36" font-family="'Liberation Sans',Arial,sans-serif" font-size="2.2" font-weight="700" fill="#2a83f2" textLength="6.90" lengthAdjust="spacingAndGlyphs">BETA</text><rect x="87.20" y="117.10" width="20.60" height="7.80" fill="#ececec" rx="0.6"/><text transform="matrix(1 0.0005 0 1 0 0)" x="90.10" y="121.94" font-family="'Liberation Sans',Arial,sans-serif" font-size="3.63" font-weight="400" fill="#505050" textLength="7.80" lengthAdjust="spacingAndGlyphs">JSON</text><path d="M101.94 120.29h2.12l-1.06 1.70z" fill="#555"/><rect x="110.90" y="117.10" width="8.00" height="7.80" fill="#ececec" rx="0.6"/><path d="M113.20 119.40h3.4M113.20 120.80h3.4v1.5h-1.6M113.20 122.30h1.2" fill="none" stroke="#f26b3a" stroke-width="0.75"/><rect x="316.60" y="118.10" width="2.6" height="3.1" rx="0.4" fill="#555"/><rect x="317.40" y="118.90" width="2.6" height="3.1" rx="0.4" fill="#444"/><circle cx="325.40" cy="119.60" r="1.35" fill="none" stroke="#555" stroke-width="0.55"/><line x1="326.40" y1="120.60" x2="327.60" y2="121.80" stroke="#555" stroke-width="0.6"/><rect x="18.60" y="127.90" width="312.90" height="3.80" fill="none" rx="0" stroke="#e9e9e9" stroke-width="0.45"/><line x1="327.00" y1="127.90" x2="327.00" y2="167.00" stroke="#ececec" stroke-width="0.45"/><rect x="327.40" y="128.20" width="1.40" height="3.20" fill="#444" rx="0"/><line x1="19.50" y1="131.70" x2="19.50" y2="167.00" stroke="#dedede" stroke-width="0.4"/><line x1="26.80" y1="136.50" x2="26.80" y2="158.80" stroke="#dedede" stroke-width="0.4"/><text transform="matrix(1 0.0005 0 1 0 0)" x="10.20" y="130.89" font-family="'Liberation Mono','DejaVu Sans Mono',monospace" font-size="3.3" font-weight="400" fill="#2b88a8" textLength="1.80" lengthAdjust="spacingAndGlyphs">1</text><rect x="19.10" y="128.40" width="2.00" height="3.00" fill="#d4ecd0" rx="0"/><text transform="matrix(1 0.0005 0 1 0 0)" x="19.30" y="130.91" font-family="'Liberation Mono','DejaVu Sans Mono',monospace" font-size="3.41" font-weight="400" fill="#333" textLength="1.87" lengthAdjust="spacingAndGlyphs" opacity="0.85">{</text><text transform="matrix(1 0.0005 0 1 0 0)" x="10.20" y="135.31" font-family="'Liberation Mono','DejaVu Sans Mono',monospace" font-size="3.3" font-weight="400" fill="#2b88a8" textLength="1.80" lengthAdjust="spacingAndGlyphs">2</text><text transform="matrix(1 0.0005 0 1 0 0)" x="26.78" y="135.33" font-family="'Liberation Mono','DejaVu Sans Mono',monospace" font-size="3.41" font-weight="400" fill="#a31515" textLength="13.09" lengthAdjust="spacingAndGlyphs" opacity="0.85">"Genre"</text><text transform="matrix(1 0.0005 0 1 0 0)" x="39.87" y="135.32" font-family="'Liberation Mono','DejaVu Sans Mono',monospace" font-size="3.41" font-weight="400" fill="#333" textLength="5.61" lengthAdjust="spacingAndGlyphs" opacity="0.85">: {</text><text transform="matrix(1 0.0005 0 1 0 0)" x="10.20" y="139.73" font-family="'Liberation Mono','DejaVu Sans Mono',monospace" font-size="3.3" font-weight="400" fill="#2b88a8" textLength="1.80" lengthAdjust="spacingAndGlyphs">3</text><text transform="matrix(1 0.0005 0 1 0 0)" x="34.26" y="139.74" font-family="'Liberation Mono','DejaVu Sans Mono',monospace" font-size="3.41" font-weight="400" fill="#a31515" textLength="11.22" lengthAdjust="spacingAndGlyphs" opacity="0.85">"Name"</text><text transform="matrix(1 0.0005 0 1 0 0)" x="45.48" y="139.74" font-family="'Liberation Mono','DejaVu Sans Mono',monospace" font-size="3.41" font-weight="400" fill="#333" textLength="1.87" lengthAdjust="spacingAndGlyphs" opacity="0.85">:</text><text transform="matrix(1 0.0005 0 1 0 0)" x="49.22" y="139.74" font-family="'Liberation Mono','DejaVu Sans Mono',monospace" font-size="3.41" font-weight="400" fill="#0451a5" textLength="16.83" lengthAdjust="spacingAndGlyphs" opacity="0.85">"Romance"</text><text transform="matrix(1 0.0005 0 1 0 0)" x="66.05" y="139.73" font-family="'Liberation Mono','DejaVu Sans Mono',monospace" font-size="3.41" font-weight="400" fill="#333" textLength="1.87" lengthAdjust="spacingAndGlyphs" opacity="0.85">,</text><text transform="matrix(1 0.0005 0 1 0 0)" x="10.20" y="144.15" font-family="'Liberation Mono','DejaVu Sans Mono',monospace" font-size="3.3" font-weight="400" fill="#2b88a8" textLength="1.80" lengthAdjust="spacingAndGlyphs">4</text><text transform="matrix(1 0.0005 0 1 0 0)" x="34.26" y="144.16" font-family="'Liberation Mono','DejaVu Sans Mono',monospace" font-size="3.41" font-weight="400" fill="#a31515" textLength="24.31" lengthAdjust="spacingAndGlyphs" opacity="0.85">"Description"</text><text transform="matrix(1 0.0005 0 1 0 0)" x="58.57" y="144.15" font-family="'Liberation Mono','DejaVu Sans Mono',monospace" font-size="3.41" font-weight="400" fill="#333" textLength="1.87" lengthAdjust="spacingAndGlyphs" opacity="0.85">:</text><text transform="matrix(1 0.0005 0 1 0 0)" x="62.31" y="144.15" font-family="'Liberation Mono','DejaVu Sans Mono',monospace" font-size="3.41" font-weight="400" fill="#0451a5" textLength="267.41" lengthAdjust="spacingAndGlyphs" opacity="0.85">"A film which deals with a sentimental relationship between two (or more) characters as its basic. Possibly the biggest purveyor of escapism in</text><text transform="matrix(1 0.0005 0 1 0 0)" x="41.74" y="148.58" font-family="'Liberation Mono','DejaVu Sans Mono',monospace" font-size="3.41" font-weight="400" fill="#0451a5" textLength="287.98" lengthAdjust="spacingAndGlyphs" opacity="0.85">film, the romance film plays on the viewer's assumption of what romance is like: long stares into a significant other's eyes accompanied by sunsets, birds</text><text transform="matrix(1 0.0005 0 1 0 0)" x="41.74" y="153.00" font-family="'Liberation Mono','DejaVu Sans Mono',monospace" font-size="3.41" font-weight="400" fill="#0451a5" textLength="284.24" lengthAdjust="spacingAndGlyphs" opacity="0.85">singing, and the sounds of violins playing in the background. The story inevitably revolves around two lovers who meet, fall in love, and then must deal</text><text transform="matrix(1 0.0005 0 1 0 0)" x="41.74" y="157.42" font-family="'Liberation Mono','DejaVu Sans Mono',monospace" font-size="3.41" font-weight="400" fill="#0451a5" textLength="74.80" lengthAdjust="spacingAndGlyphs" opacity="0.85">with the obstacles thrown in their way."</text><text transform="matrix(1 0.0005 0 1 0 0)" x="10.20" y="161.83" font-family="'Liberation Mono','DejaVu Sans Mono',monospace" font-size="3.3" font-weight="400" fill="#2b88a8" textLength="1.80" lengthAdjust="spacingAndGlyphs">5</text><text transform="matrix(1 0.0005 0 1 0 0)" x="26.78" y="161.85" font-family="'Liberation Mono','DejaVu Sans Mono',monospace" font-size="3.41" font-weight="400" fill="#333" textLength="3.74" lengthAdjust="spacingAndGlyphs" opacity="0.85">},</text><text transform="matrix(1 0.0005 0 1 0 0)" x="10.20" y="166.25" font-family="'Liberation Mono','DejaVu Sans Mono',monospace" font-size="3.3" font-weight="400" fill="#2b88a8" textLength="1.80" lengthAdjust="spacingAndGlyphs">6</text><text transform="matrix(1 0.0005 0 1 0 0)" x="26.78" y="166.27" font-family="'Liberation Mono','DejaVu Sans Mono',monospace" font-size="3.41" font-weight="400" fill="#a31515" textLength="18.70" lengthAdjust="spacingAndGlyphs" opacity="0.85">"Director"</text><text transform="matrix(1 0.0005 0 1 0 0)" x="45.48" y="166.26" font-family="'Liberation Mono','DejaVu Sans Mono',monospace" font-size="3.41" font-weight="400" fill="#333" textLength="5.61" lengthAdjust="spacingAndGlyphs" opacity="0.85">: {</text><line x1="335.30" y1="1.80" x2="335.30" y2="109.50" stroke="#9a9a9a" stroke-width="1.2"/><line x1="335.30" y1="109.50" x2="335.30" y2="167.00" stroke="#dcdcdc" stroke-width="1.1"/></g></svg></figure>
<div id="foot"></div>
</body></html>
